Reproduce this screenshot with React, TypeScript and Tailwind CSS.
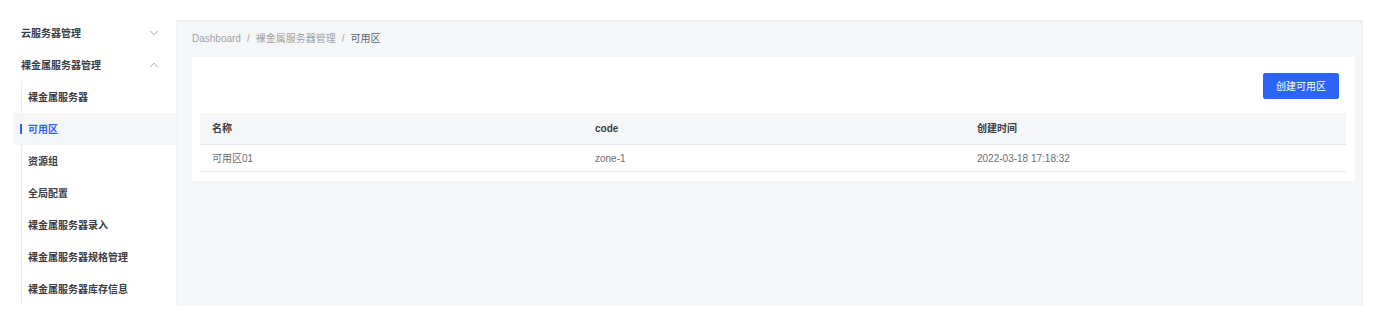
import React from "react";

const font = { fontFamily: '"Liberation Sans", "Noto Sans CJK SC", sans-serif' };

function Chevron({ up }: { up?: boolean }) {
  return (
    <svg width="10" height="6" viewBox="0 0 10 6" fill="none" className="text-[#a8abb2]">
      {up ? (
        <path d="M1 5.2 L5 1.2 L9 5.2" stroke="currentColor" strokeWidth="1" />
      ) : (
        <path d="M1 0.8 L5 4.8 L9 0.8" stroke="currentColor" strokeWidth="1" />
      )}
    </svg>
  );
}

const children = [
  "裸金属服务器",
  "可用区",
  "资源组",
  "全局配置",
  "裸金属服务器录入",
  "裸金属服务器规格管理",
  "裸金属服务器库存信息",
];

export default function App() {
  return (
    <div className="w-[1382px] h-[324px] bg-white flex overflow-hidden" style={font}>
      {/* Sidebar */}
      <div className="w-[176px] shrink-0 pl-[13px] pt-[17px] flex flex-col">
        <div className="h-[32px] flex items-center justify-between pl-[8px] pr-[17px] text-[10px] font-semibold text-[#3a3d44]">
          <span>云服务器管理</span>
          <Chevron />
        </div>
        <div className="h-[32px] flex items-center justify-between pl-[8px] pr-[17px] text-[10px] font-semibold text-[#3a3d44]">
          <span>裸金属服务器管理</span>
          <Chevron up />
        </div>
        <div className="relative flex flex-col">
          <div className="absolute left-[8px] top-0 h-[224px] w-px bg-[#ececef]" />
          {children.map((c) => {
            const active = c === "可用区";
            return (
              <div
                key={c}
                className={
                  active
                    ? "relative h-[32px] flex items-center pl-[15px] text-[10px] font-semibold text-[#2d64f8] bg-[#f5f6f8]"
                    : "relative h-[32px] flex items-center pl-[15px] text-[10px] font-semibold text-[#3a3d44]"
                }
              >
                {active && <div className="absolute left-[7px] top-[11px] h-[10px] w-[2px] bg-[#2d64f8]" />}
                <span>{c}</span>
              </div>
            );
          })}
        </div>
      </div>

      {/* Main */}
      <div className="mt-[20px] w-[1187px] h-[286px] bg-[#f5f6f8] shadow-[inset_0_2px_3px_rgba(0,0,0,0.04)] flex flex-col pl-[16px] pr-[8px]">
        <div className="h-[37px] flex items-center text-[10px] text-[#a0a3aa] gap-[6px]">
          <span>Dashboard</span>
          <span>/</span>
          <span>裸金属服务器管理</span>
          <span>/</span>
          <span className="text-[#606368]">可用区</span>
        </div>
        <div className="bg-white h-[124px] pt-[16px] pl-[8px] pr-[9px]">
          <div className="flex justify-end pr-[7px]">
            <div className="w-[76px] h-[26px] rounded-[2px] bg-[#2d64f8] text-white text-[10px] flex items-center justify-center">
              创建可用区
            </div>
          </div>
          <div className="mt-[14px]">
            <div className="grid grid-cols-3 h-[32px] bg-[#f5f6f8] border-b border-[#e8e9ec] items-center text-[10px] font-semibold text-[#3a3d44]">
              <div className="pl-[12px]">名称</div>
              <div className="pl-[13px]">code</div>
              <div className="pl-[13px]">创建时间</div>
            </div>
            <div className="grid grid-cols-3 h-[27px] border-b border-[#e8e9ec] items-center text-[10px] text-[#6b6e75]">
              <div className="pl-[12px]">可用区01</div>
              <div className="pl-[13px]">zone-1</div>
              <div className="pl-[13px]">2022-03-18 17:18:32</div>
            </div>
          </div>
        </div>
      </div>
    </div>
  );
}
